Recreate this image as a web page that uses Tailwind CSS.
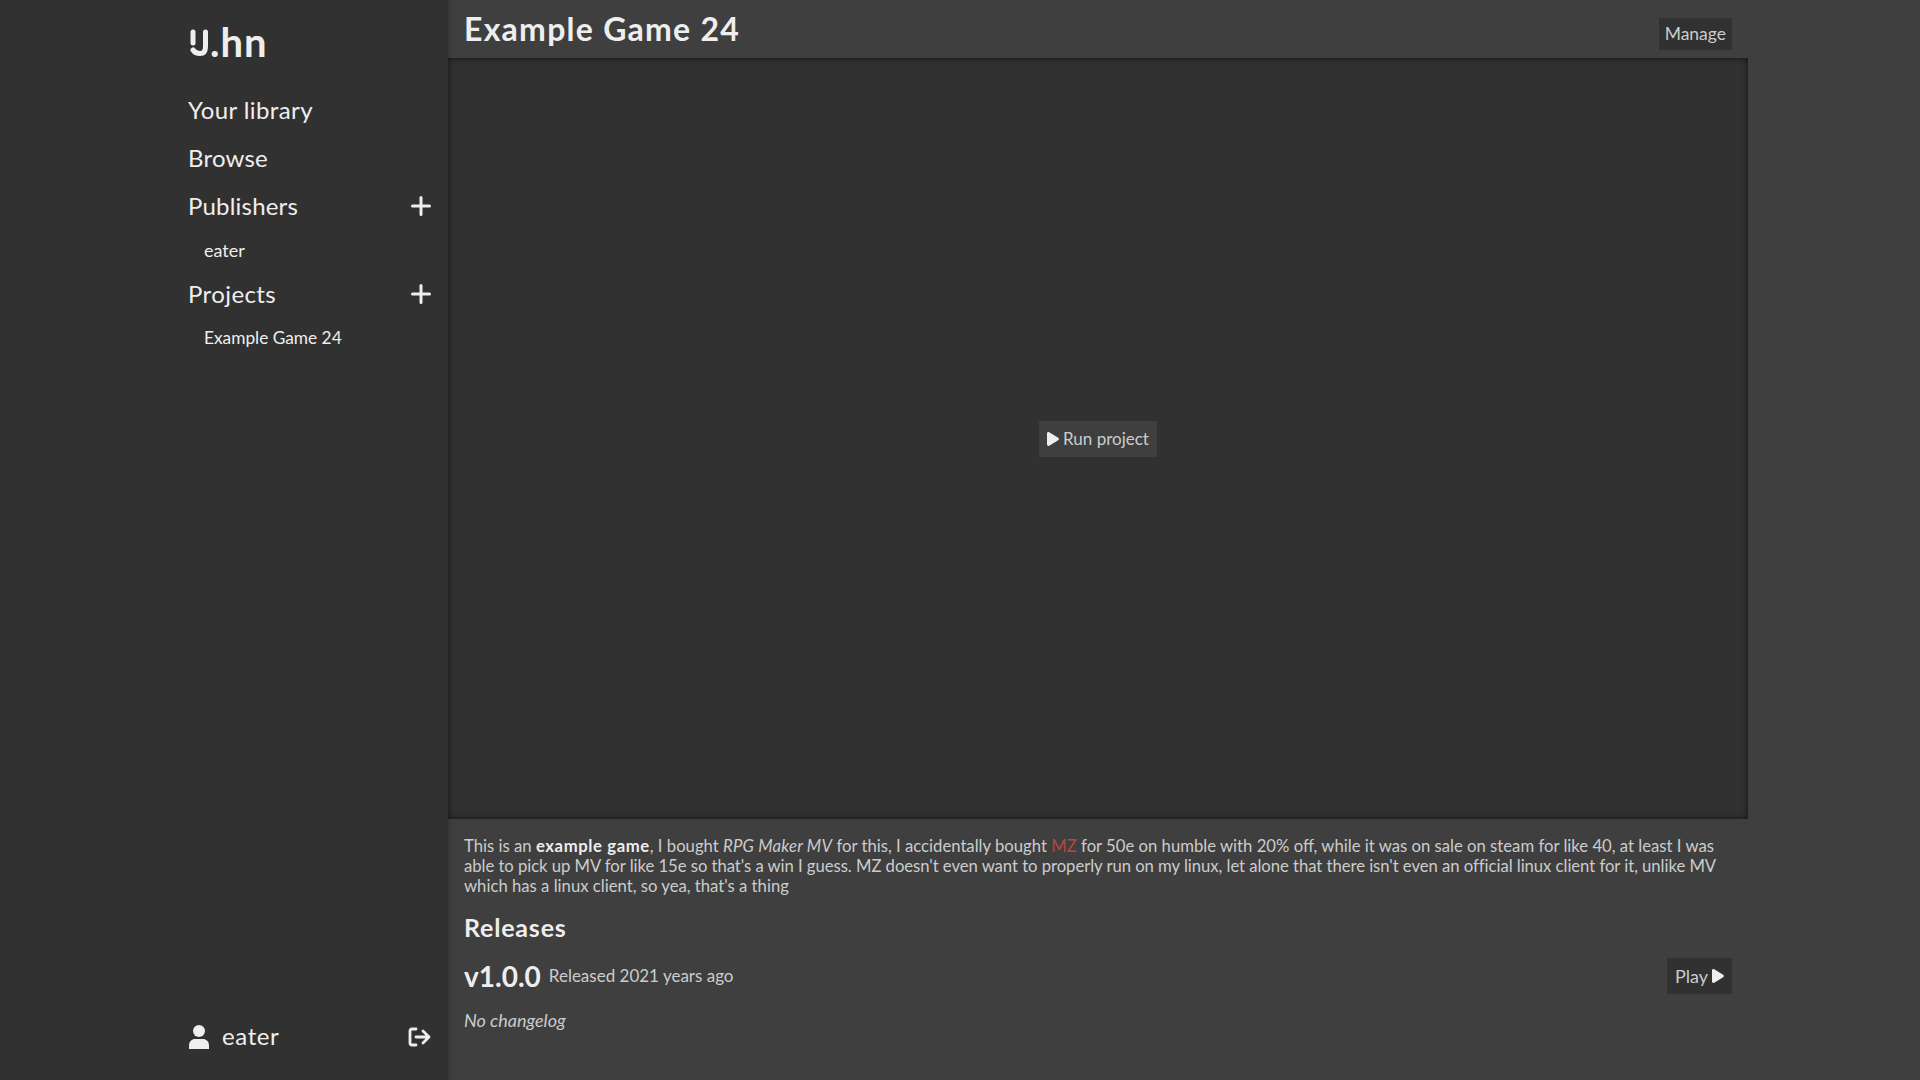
<!DOCTYPE html>
<html lang="en">
<head>
  <meta charset="UTF-8"/>
  <title>Example Game 24</title>
  <script src="https://cdn.jsdelivr.net/npm/@tailwindcss/browser@4"></script>
</head>
<body class="bg-[#3f3f3f] text-[#eeeeee] font-['Lato',sans-serif] h-screen overflow-hidden flex">

  <!-- Sidebar -->
  <aside class="w-[448px] h-full shrink-0 bg-[#313131] pl-[188px] pr-[17px] flex flex-col shadow-[0_0_4px_#2a2a2a]">
    <div class="flex items-center h-[86px] pb-[2px] text-[40px] font-bold leading-none tracking-[1px]">
      <svg class="w-[21px] h-[30px] mr-px" viewBox="0 0 21 30" fill="none" stroke="#eeeeee" stroke-width="5" stroke-linecap="round">
        <path d="M5 5v11"/>
        <path d="M5 23c2 3 5 3.500 7 3.500c4 0 5.500-3 5.500-7V5"/>
      </svg>
      <span>.hn</span>
    </div>
    <a class="h-12 flex items-center text-2xl tracking-[0.4px]">Your library</a>
    <a class="h-12 flex items-center text-2xl tracking-[0.2px]">Browse</a>
    <div class="h-12 flex items-center justify-between text-2xl tracking-[0.2px]">
      <span>Publishers</span>
      <svg class="w-5 h-5" viewBox="0 0 20 20" stroke="#eeeeee" stroke-width="3" stroke-linecap="round"><path d="M10 1.500v17M1.500 10h17"/></svg>
    </div>
    <a class="h-10 pl-4 flex items-center text-lg">eater</a>
    <div class="h-12 flex items-center justify-between text-2xl tracking-[0.4px]">
      <span>Projects</span>
      <svg class="w-5 h-5" viewBox="0 0 20 20" stroke="#eeeeee" stroke-width="3" stroke-linecap="round"><path d="M10 1.500v17M1.500 10h17"/></svg>
    </div>
    <a class="h-10 pl-4 flex items-center text-[17.3px]">Example Game 24</a>
    <div class="mt-auto h-[66px] pb-5 flex items-center justify-between">
      <div class="flex items-center gap-[13px] text-2xl tracking-[0.6px] pl-px">
        <svg class="w-5 h-6" viewBox="0 0 20 24" fill="#eeeeee"><circle cx="10" cy="6" r="6"/><path d="M0 24v-3c0-5 3-7 6-7h8c3 0 6 2 6 7v3z"/></svg>
        <span class="-mt-[2px]">eater</span>
      </div>
      <svg class="w-6 h-5 -mr-px" viewBox="0 0 24 20" fill="none" stroke="#eeeeee" stroke-width="2.8" stroke-linecap="round" stroke-linejoin="round">
        <path d="M8 2H4C2.500 2 2 3 2 4v12c0 1 .5 2 2 2h4"/>
        <path d="M8 10h13M15 4l6 6-6 6"/>
      </svg>
    </div>
  </aside>

  <!-- Main -->
  <main class="w-[1300px] h-full flex flex-col">
    <header class="h-[58px] shrink-0 px-4 flex items-start justify-between">
      <h1 class="text-[32px] leading-[57px] font-bold tracking-[1.25px]">Example Game 24</h1>
      <button class="mt-[18px] h-8 px-[6px] bg-[#313131] text-[17.5px] text-[#cccccc]">Manage</button>
    </header>

    <div class="h-[761px] shrink-0 bg-[#313131] shadow-[inset_0_0_6px_#111111] flex items-center justify-center">
      <button class="h-9 px-2 bg-[#3f3f3f] text-[17px] text-[#cccccc] flex items-center gap-1">
        <svg class="w-3 h-[14px]" viewBox="0 0 12 14" fill="#eeeeee"><path d="M0 1.500C0 .3 1.200-.3 2.200.3l9 5.500c.9.5.9 1.900 0 2.400l-9 5.500C1.200 14.300 0 13.700 0 12.500z"/></svg>
        Run project
      </button>
    </div>

    <section class="px-4 pt-[17px]">
      <p class="text-[16.7px] leading-5 text-[#cccccc]">This is an <b class="font-bold text-[#eeeeee] tracking-[0.6px]">example game</b>, I bought <i class="tracking-[0.2px]">RPG Maker MV</i> for this, I accidentally bought <span class="text-[#b5483f]">MZ</span> for 50e on humble with 20% off, while it was on sale on steam for like 40, at least I was<br/><span class="tracking-[-0.05px]">able to pick up MV for like 15e so that's a win I guess. MZ doesn't even want to properly run on my linux, let alone that there isn't even an official linux client for it, unlike MV</span><br/>which has a linux client, so yea, that's a thing</p>
      <h2 class="mt-4 text-[25px] leading-[30px] font-bold tracking-[0.8px]">Releases</h2>
      <div class="mt-4 h-9 flex items-center">
        <span class="text-[28px] font-bold">v1.0.0</span>
        <span class="ml-2 text-[17px] text-[#cccccc]">Released 2021 years ago</span>
        <button class="ml-auto h-9 px-[8px] bg-[#313131] text-lg text-[#cccccc] flex items-center gap-1">
          Play
          <svg class="w-3 h-[14px]" viewBox="0 0 12 14" fill="#eeeeee"><path d="M0 1.500C0 .3 1.200-.3 2.200.3l9 5.500c.9.5.9 1.900 0 2.400l-9 5.500C1.200 14.300 0 13.700 0 12.500z"/></svg>
        </button>
      </div>
      <p class="mt-[13px] text-lg leading-[26px] italic text-[#cccccc]">No changelog</p>
    </section>
  </main>
</body>
</html>
